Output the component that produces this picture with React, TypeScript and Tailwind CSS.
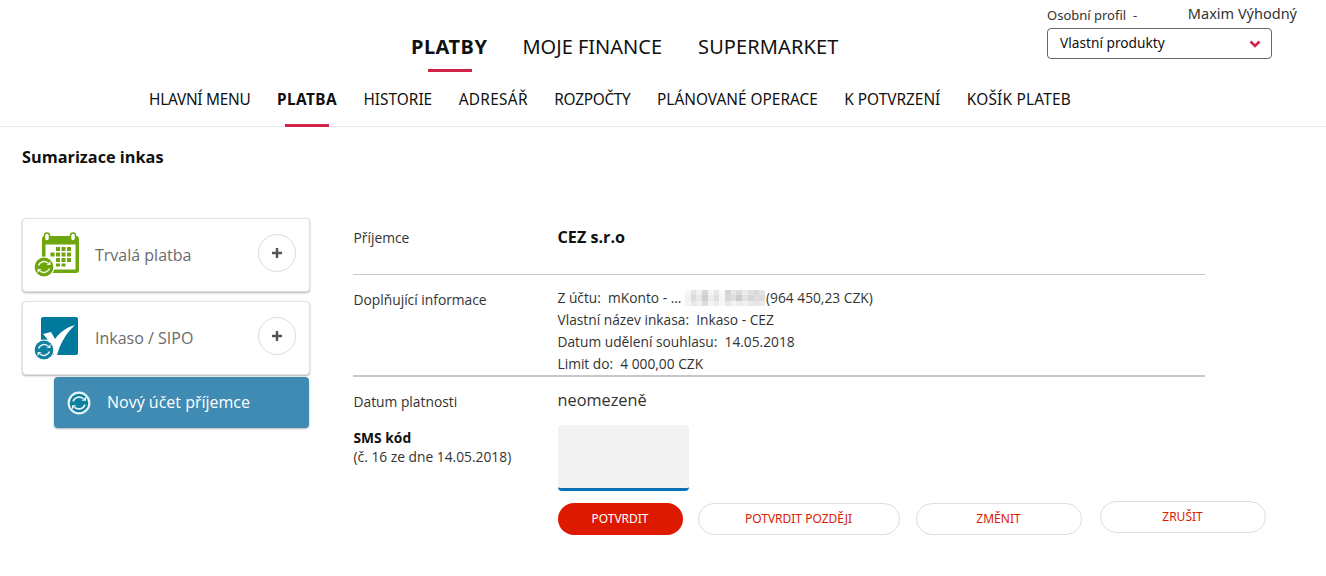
const topLinks = ['PLATBY', 'MOJE FINANCE', 'SUPERMARKET'];
const subLinks = [
  { label: 'HLAVNÍ MENU', cls: 'tracking-[-0.25px]' },
  { label: 'PLATBA', cls: 'font-bold tracking-[0.4px]' },
  { label: 'HISTORIE', cls: '' },
  { label: 'ADRESÁŘ', cls: 'tracking-[0.3px]' },
  { label: 'ROZPOČTY', cls: 'tracking-[-0.3px]' },
  { label: 'PLÁNOVANÉ OPERACE', cls: '' },
  { label: 'K POTVRZENÍ', cls: '' },
  { label: 'KOŠÍK PLATEB', cls: 'tracking-[0.2px]' },
];
const blur = [
  '#f6f6f6', '#e4e4e4', '#f0f0f0', '#d8d8d8', '#f4f4f4', '#e8e8e8', '#f8f8f8', '#d4d4d4', '#e6e6e6', '#dcdcdc', '#ececec', '#e0e0e0', '#d8d8d8', '#e4e4e4',
  '#f2f2f2', '#dcdcdc', '#e8e8e8', '#cfcfcf', '#eeeeee', '#e0e0e0', '#f6f6f6', '#d8d8d8', '#dedede', '#cccccc', '#e4e4e4', '#d6d6d6', '#dedede', '#dcdcdc',
  '#f4f4f4', '#e8e8e8', '#f0f0f0', '#dddddd', '#f4f4f4', '#ececec', '#f8f8f8', '#e8e8e8', '#f2f2f2', '#ececec', '#f0f0f0', '#e8e8e8', '#e6e6e6', '#eaeaea',
];

function Sync({ bg, fg }: { bg: string; fg: string }) {
  return (
    <g>
      <circle cx="11" cy="11" r="10" fill={bg} stroke="#fff" strokeWidth="1.2" />
      <path d="M5.500 9.500A6 6 0 0 1 15 7M16.500 12.500A6 6 0 0 1 7 15" fill="none" stroke={fg} strokeWidth="1.500" />
      <path d="M13.500 9h4V5zM8.500 13H4.500v4z" fill={fg} />
    </g>
  );
}

function CalendarIcon() {
  return (
    <svg width="46" height="46" viewBox="0 0 46 46" className="shrink-0">
      <rect x="8" y="4" width="37" height="37" rx="3" fill="#6fa60e" />
      <rect x="11.500" y="12.500" width="30" height="25" fill="#fff" />
      <rect x="10.500" y="1" width="5" height="8" rx="2.500" fill="#fff" stroke="#6fa60e" strokeWidth="1.500" />
      <rect x="36.500" y="1" width="5" height="8" rx="2.500" fill="#fff" stroke="#6fa60e" strokeWidth="1.500" />
      <path d="M22 15h4v4h-4zM27.500 15h4v4h-4zM33 15h4v4h-4zM22 20.500h4v4h-4zM27.500 20.500h4v4h-4zM33 20.500h4v4h-4zM22 26h4v4h-4zM27.500 26h4v4h-4zM33 26h4v4h-4zM22 31.500h4v3h-4zM27.500 31.500h4v3h-4zM16.500 20.500h4v4h-4z" fill="#6fa60e" />
      <g transform="translate(-1 24)"><Sync bg="#6fa60e" fg="#eef6dc" /></g>
    </svg>
  );
}

function CheckIcon() {
  return (
    <svg width="46" height="46" viewBox="0 0 46 46" className="shrink-0">
      <rect x="7" y="2" width="37" height="38" rx="2" fill="#00799c" />
      <path d="M9 19l8-2 4 7C26 17 33 12 41 10 32 18 26 29 23 40h-3C18 32 14 24 9 19z" fill="#fff" />
      <g transform="translate(-1 24)"><Sync bg="#0f7f9e" fg="#e3f1f5" /></g>
    </svg>
  );
}

function ServiceCard({ label, children }: { label: string; children: React.ReactNode }) {
  return (
    <div className="h-[74px] w-[288px] rounded border border-[#e2e2e2] bg-white shadow-[0_1px_2px_rgba(0,0,0,0.3)] flex items-center pl-[11px] pr-[13px]">
      {children}
      <span className="ml-[15px] text-[16px] text-[#6b6b6b]">{label}</span>
      <span className="ml-auto -mt-1 w-[38px] h-[38px] rounded-full border border-[#dcdcdc] flex items-center justify-center">
        <svg width="12" height="12" viewBox="0 0 12 12"><path d="M6 1v10M1 6h10" stroke="#555" strokeWidth="2.500" /></svg>
      </span>
    </div>
  );
}

function ActionButton({ label, primary, className }: { label: string; primary?: boolean; className: string }) {
  return (
    <button className={`h-[32px] rounded-full text-[12px] font-['Noto_Sans',sans-serif] ${primary ? 'bg-[#dd1a00] text-white' : 'border border-[#dedede] bg-white text-[#dd1a00]'} ${className}`}>
      {label}
    </button>
  );
}

export default function App() {
  return (
    <div className="w-[1326px] h-[576px] overflow-hidden bg-white text-[#333] font-['Open_Sans',sans-serif]">
      <header className="h-[127px] border-b border-[#ebebeb] font-['Noto_Sans',sans-serif] text-[#111]">
        <div className="h-[72px] flex">
          <nav className="ml-[411px] mt-[33px] flex gap-[35px] text-[20px] leading-[28px]">
            {topLinks.map((l, i) => (
              <a key={l} className={`relative h-[39px] last:ml-[1px] last:tracking-[0.1px] ${i === 0 ? 'font-bold tracking-[0.5px]' : ''}`}>
                {l}
                {i === 0 && <span className="absolute left-[17px] bottom-0 h-[3px] w-[44px] bg-[#cf2347]" />}
              </a>
            ))}
          </nav>
          <div className="ml-auto mr-[29px] w-[250px] pt-[5px]">
            <div className="flex text-[13px] text-[#333] leading-[18px]">
              <span className="mt-[1px]">Osobní profil&nbsp; -</span>
              <span className="ml-auto text-[14.500px] -mt-[1px]">Maxim Výhodný</span>
            </div>
            <div className="mt-[4px] w-[225px] h-[31px] rounded border border-[#666] flex items-center pl-[12px] pr-[13px] pb-[1px] text-[13.700px]">
              Vlastní produkty
              <svg width="12" height="8" viewBox="0 0 12 8" className="ml-auto -mr-[3px] mt-[1px]"><path d="M1.500 1.500L6 6l4.500-4.500" fill="none" stroke="#cf2347" strokeWidth="2.600" /></svg>
            </div>
          </div>
        </div>
        <nav className="ml-[149px] h-[55px] flex gap-[26.500px] text-[15.400px] leading-[56px]">
          {subLinks.map((l, i) => (
            <a key={l.label} className={`relative ${l.cls}`}>
              {l.label}
              {i === 1 && <span className="absolute left-[8px] bottom-0 h-[3px] w-[44px] bg-[#cf2347]" />}
            </a>
          ))}
        </nav>
      </header>

      <main className="pl-[22px]">
        <h1 className="pt-[20px] text-[16.300px] leading-[20px] font-bold text-[#111]">Sumarizace inkas</h1>
        <div className="mt-[51px] flex">
          <aside className="w-[331px] shrink-0">
            <div className="flex flex-col gap-[9px]">
              <ServiceCard label="Trvalá platba"><CalendarIcon /></ServiceCard>
              <ServiceCard label="Inkaso / SIPO"><CheckIcon /></ServiceCard>
            </div>
            <div className="ml-[32px] mt-[2px] h-[51px] w-[255px] rounded-sm bg-[#408bb3] shadow-[0_1px_2px_rgba(0,0,0,0.3)] flex items-center pl-[13px] pb-[2px] text-[16px] font-medium text-white">
              <svg width="24" height="24" viewBox="0 0 22 22" className="mr-[16px] mt-[2px]">
                <circle cx="11" cy="11" r="9.500" fill="#0f7f9e" stroke="#e8f4f7" strokeWidth="2" />
                <path d="M5.500 9.500A6 6 0 0 1 15 7M16.500 12.500A6 6 0 0 1 7 15" fill="none" stroke="#e8f4f7" strokeWidth="1.500" />
                <path d="M13.500 9h4V5zM8.500 13h-4v4z" fill="#e8f4f7" />
              </svg>
              Nový účet příjemce
            </div>
          </aside>

          <section className="w-[852px] text-[13.800px] -ml-[0.500px]">
            <div className="h-[57px] flex border-b border-[#c8c8c8]">
              <span className="w-[205px] shrink-0 pt-[10px] leading-[20px] pl-[1px]">Příjemce</span>
              <span className="pt-[9px] text-[16.200px] leading-[20px] font-bold text-[#111]">CEZ s.r.o</span>
            </div>
            <div className="h-[102px] flex border-b-2 border-[#c8c8c8]">
              <span className="w-[205px] shrink-0 pt-[14px] leading-[22px] pl-[1px]">Doplňující informace</span>
              <div className="pt-[12px] leading-[22px] text-[13.750px]">
                <div className="flex items-center">
                  Z účtu:&nbsp; mKonto - ...&nbsp;
                  <span className="grid grid-cols-14 grid-rows-3 w-[80px] h-[16px] mr-[1px]">
                    {blur.map((c, i) => <span key={i} style={{ background: c }} />)}
                  </span>
                  (964 450,23 CZK)
                </div>
                <div>Vlastní název inkasa:&nbsp; Inkaso - CEZ</div>
                <div>Datum udělení souhlasu:&nbsp; 14.05.2018</div>
                <div>Limit do:&nbsp; 4 000,00 CZK</div>
              </div>
            </div>
            <div className="h-[48px] flex">
              <span className="w-[205px] shrink-0 pt-[15px] leading-[20px] pl-[1px]">Datum platnosti</span>
              <span className="pt-[13px] text-[16.300px] leading-[20px]">neomezeně</span>
            </div>
            <div className="flex">
              <div className="w-[205px] shrink-0 pl-[1px] pt-[3px] leading-[19px]">
                <div className="font-bold text-[#111]">SMS kód</div>
                <div className="whitespace-nowrap">(č. 16 ze dne 14.05.2018)</div>
              </div>
              <div>
                <div className="h-[66px] w-[131px] rounded-sm bg-[#f2f2f2] border-b-[3px] border-[#0a70b5]" />
                <div className="mt-[12px] flex items-start w-[708px]">
                  <ActionButton primary label="POTVRDIT" className="w-[125px] shrink-0" />
                  <ActionButton label="POTVRDIT POZDĚJI" className="ml-[15px] w-[202px] shrink-0" />
                  <ActionButton label="ZMĚNIT" className="ml-[16px] w-[166px] shrink-0" />
                  <ActionButton label="ZRUŠIT" className="ml-[18px] -mt-[2px] w-[166px] shrink-0" />
                </div>
              </div>
            </div>
          </section>
        </div>
      </main>
    </div>
  );
}
